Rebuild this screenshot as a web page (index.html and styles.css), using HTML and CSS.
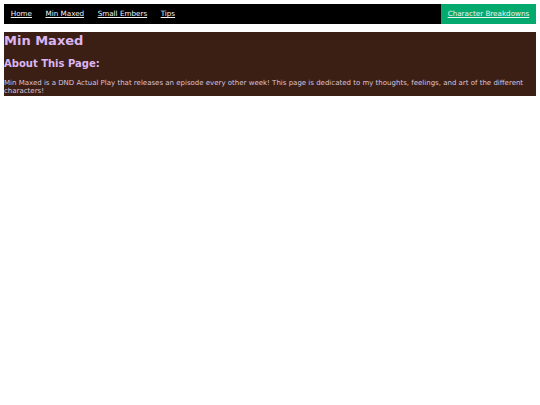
FILE: index.html
```html
<!DOCTYPE html>
<html lang="en">
<head>
<meta charset="utf-8">
<title>Min Maxed</title>
<link rel="stylesheet" href="styles.css">
</head>
<body>
<nav class="topnav">
  <a href="#" class="nav-link">Home</a>
  <a href="#" class="nav-link">Min Maxed</a>
  <a href="#" class="nav-link">Small Embers</a>
  <a href="#" class="nav-link">Tips</a>
  <a href="#" class="nav-link active">Character Breakdowns</a>
</nav>
<header class="intro">
  <h1 class="title">Min Maxed</h1>
  <h2 class="subtitle">About This Page:</h2>
  <p class="about">Min Maxed is a DND Actual Play that releases an episode every other week! This page is dedicated to my thoughts, feelings, and art of the different characters!</p>
</header>
</body>
</html>
```
FILE: styles.css
```css
html, body {
  background: #ffffff;
}
body {
  margin: 4px;
  font-family: "DejaVu Sans", Verdana, sans-serif;
}
.topnav {
  display: flex;
  height: 20px;
  background: #000000;
}
.nav-link {
  display: block;
  padding: 0 6.75px;
  line-height: 20px;
  font-size: 7.2px;
  color: #f2f2f2;
  text-decoration: underline;
}
.nav-link.active {
  margin-left: auto;
  background: #04aa6d;
}
.intro {
  margin-top: 8px;
  background: #3b1f15;
  padding: 1px 0 1.5px;
}
.title {
  margin: 0;
  font-size: 13px;
  line-height: 16px;
  color: #dcb6f2;
}
.subtitle {
  margin: 8.5px 0 9px;
  font-size: 10px;
  line-height: 12px;
  color: #dcb6f2;
}
.about {
  margin: 0;
  font-size: 7px;
  line-height: 8px;
  color: #d9c2dc;
}
```
